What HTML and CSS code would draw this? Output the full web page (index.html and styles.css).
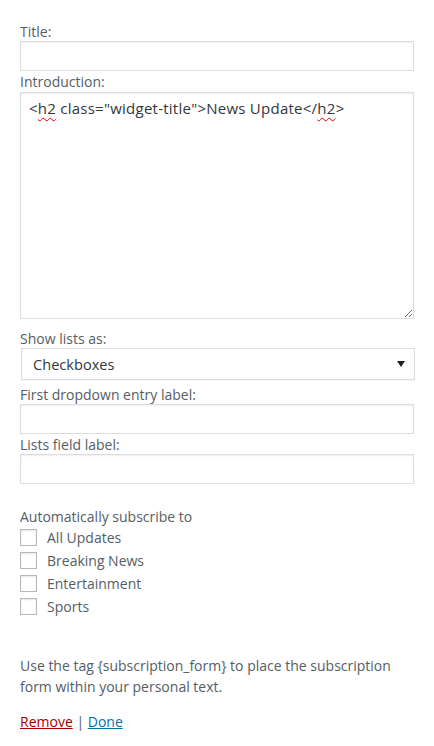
FILE: index.html
```html
<!DOCTYPE html>
<html>
<head>
<meta charset="utf-8">
<link rel="stylesheet" href="styles.css">
</head>
<body>
<form class="widget-form">
  <div class="field">
    <label class="lbl">Title:</label>
    <input class="txt" type="text">
  </div>
  <div class="field">
    <label class="lbl">Introduction:</label>
    <div class="area">&lt;<span class="spell">h2</span> class="widget-title"&gt;News Update&lt;/<span class="spell">h2</span>&gt;</div>
  </div>
  <div class="field gap-top">
    <label class="lbl">Show lists as:</label>
    <div class="select">
      <span>Checkboxes</span>
      <svg class="arrow" width="8" height="6" viewBox="0 0 8 6"><path d="M0 0H8L4 6Z" fill="#222"/></svg>
    </div>
  </div>
  <div class="field">
    <label class="lbl">First dropdown entry label:</label>
    <input class="txt" type="text">
  </div>
  <div class="field">
    <label class="lbl">Lists field label:</label>
    <input class="txt" type="text">
  </div>
  <div class="subscribe">
    <div class="lbl">Automatically subscribe to</div>
    <label class="check"><span class="box"></span>All Updates</label>
    <label class="check"><span class="box"></span>Breaking News</label>
    <label class="check"><span class="box"></span>Entertainment</label>
    <label class="check"><span class="box"></span>Sports</label>
  </div>
  <p class="note">Use the tag {subscription_form} to place the subscription form within your personal text.</p>
  <div class="actions"><a class="remove" href="#">Remove</a> | <a class="done" href="#">Done</a></div>
</form>
</body>
</html>
```
FILE: styles.css
```css
html, body {
  margin: 0;
  padding: 0;
  background: #fff;
}
body {
  font-family: "Open Sans", "Noto Sans", sans-serif;
  font-size: 14px;
  color: #555d66;
}
.widget-form {
  width: 394px;
  padding: 22px 20px 0 20px;
}
.field {
  display: flex;
  flex-direction: column;
}
.gap-top {
  margin-top: 10px;
}
.lbl {
  display: block;
  line-height: 19px;
  height: 19px;
}
.txt {
  box-sizing: border-box;
  height: 30px;
  width: 394px;
  margin: 0 0 1px 0;
  border: 1px solid #ddd;
  box-shadow: inset 0 1px 2px rgba(0,0,0,.07);
  font: inherit;
  padding: 3px 5px;
  outline: none;
}
.area {
  box-sizing: border-box;
  margin-top: 1px;
  width: 394px;
  height: 227px;
  border: 1px solid #ddd;
  box-shadow: inset 0 1px 2px rgba(0,0,0,.07);
  font-size: 15px;
  letter-spacing: 0.25px;
  color: #32373c;
  padding: 5px 8px;
  line-height: 20px;
  overflow: auto;
  resize: both;
}
.spell {
  text-decoration: underline wavy #e00;
  text-decoration-thickness: 1px;
  text-underline-offset: 3px;
}
.select {
  box-sizing: border-box;
  margin-left: 1px;
  width: 394px;
  height: 32px;
  border: 1px solid #ddd;
  box-shadow: 0 1px 1px rgba(0,0,0,.04);
  display: flex;
  align-items: center;
  justify-content: space-between;
  padding: 0 9px 0 11px;
  color: #32373c;
  font-size: 14.6px;
  margin-bottom: 5px;
}
.arrow {
  display: block;
}
.subscribe {
  margin-top: 22px;
  display: flex;
  flex-direction: column;
}
.subscribe .lbl {
  height: 19px;
  line-height: 19px;
}
.check {
  display: flex;
  align-items: center;
  height: 23px;
  gap: 10px;
}
.box {
  box-sizing: border-box;
  width: 17px;
  height: 17px;
  border: 1px solid #b4b9be;
  box-shadow: inset 0 1px 2px rgba(0,0,0,.1);
  background: #fff;
}
.note {
  margin: 37px 0 0 0;
  line-height: 21px;
}
.actions {
  margin-top: 14px;
  line-height: 21px;
}
.remove {
  color: #a00;
}
.done {
  color: #0073aa;
}
```
